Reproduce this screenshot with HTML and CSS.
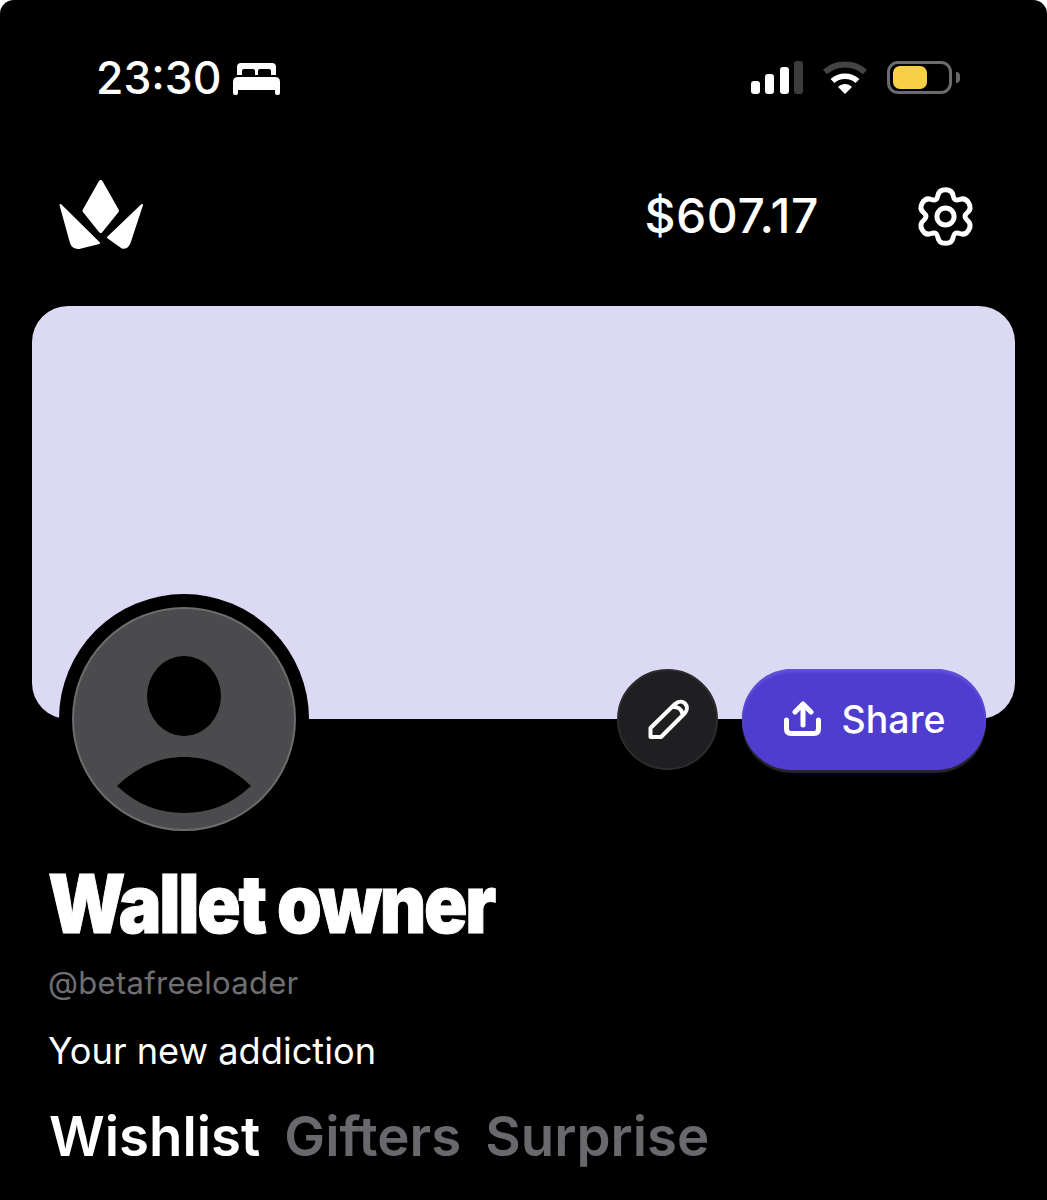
FILE: index.html
```html
<!DOCTYPE html>
<html lang="en">
<head>
<meta charset="utf-8">
<title>Wallet owner</title>
<link rel="stylesheet" href="styles.css">
</head>
<body>
<div class="app">
  <div class="status">
    <div class="status-left">
      <span class="time">23:30</span>
      <svg class="bed" viewBox="0 0 47 33" width="47" height="33"><path fill="#fff" d="M4 13V5q0-4 4-4h31q4 0 4 4v8h-5V9q0-2-2-2h-9q-2 0-2 2v4h-3V9q0-2-2-2h-9q-2 0-2 2v4zM5 15h37q5 0 5 5v11q0 2-2 2h-1q-2 0-2-2v-3H5v3q0 2-2 2H2q-2 0-2-2V20q0-5 5-5z"/></svg>
    </div>
    <div class="status-right">
      <svg class="signal" viewBox="0 0 53 33" width="53" height="33">
        <rect x="0" y="20" width="9" height="13" rx="3" fill="#fff"/>
        <rect x="14" y="13" width="9" height="20" rx="3" fill="#fff"/>
        <rect x="29" y="6" width="9" height="27" rx="3" fill="#fff"/>
        <rect x="43" y="0" width="9" height="33" rx="3" fill="#3c3c3e"/>
      </svg>
      <svg class="wifi" viewBox="0 0 46 33" width="46" height="33">
        <path d="M3 11C14 1 32 1 43 11" fill="none" stroke="#444446" stroke-width="6"/>
        <path d="M10.500 20C17 13.500 29 13.500 35.500 20" fill="none" stroke="#fff" stroke-width="5.500"/>
        <path d="M16 26c4-4 10-4 14 0l-7 7z" fill="#fff"/>
      </svg>
      <div class="battery"><div class="battery-level"></div></div>
      <div class="battery-nub"></div>
    </div>
  </div>

  <header class="top">
    <svg class="logo" viewBox="0 0 86 72" width="86" height="72">
      <g fill="#fff" stroke="#fff" stroke-linejoin="round">
        <path stroke-width="4" d="M42.700 4 59 32.700 42.700 53 26.500 32.700z"/>
        <path stroke-width="2" d="M2.500 27 41 65 21 70Q15 70.500 13 65z"/>
        <path stroke-width="2" d="M84 27 50 59.500 64 69.500Q70 71 72.500 62z"/>
      </g>
    </svg>
    <span class="balance">$607.17</span>
    <svg class="gear" viewBox="-32 -32 64 64" width="61" height="61">
      <path fill="none" stroke="#fff" stroke-width="5.200" d="M-8.010 -21.870Q-7.020 -28.140 0 -28.140Q7.020 -28.140 8.010 -21.870Q9 -15.590 14.930 -17.870Q20.860 -20.150 24.370 -14.070Q27.880 -7.990 22.940 -4Q18 0 22.940 4Q27.880 7.990 24.370 14.070Q20.860 20.150 14.930 17.870Q9 15.590 8.010 21.870Q7.020 28.140 0 28.140Q-7.020 28.140 -8.010 21.870Q-9 15.590 -14.930 17.870Q-20.860 20.150 -24.370 14.070Q-27.880 7.990 -22.940 4Q-18 0 -22.940 -4Q-27.880 -7.990 -24.370 -14.070Q-20.860 -20.150 -14.930 -17.870Q-9 -15.590 -8.010 -21.870Z"/>
      <circle r="9" fill="none" stroke="#fff" stroke-width="5.200"/>
    </svg>
  </header>

  <section class="banner">
    <div class="avatar-ring">
      <div class="avatar">
        <svg viewBox="0 0 220 220" width="220" height="220">
          <ellipse cx="110" cy="87" rx="37" ry="40" fill="#000"/>
          <path d="M43 177C62 159 84 148 110 148C136 148 158 159 177 177C158 195 136 204 110 204C84 204 62 195 43 177Z" fill="#000"/>
        </svg>
      </div>
    </div>
  </section>

  <div class="actions">
    <button class="edit" type="button" aria-label="Edit">
      <svg viewBox="0 0 42 42" width="42" height="42" fill="none" stroke="#fff" stroke-width="4" stroke-linejoin="round" stroke-linecap="round">
        <path d="M3.500 29 28 5C31.500 2 35.500 2 38 4.500C40.500 7 40.500 11 38 14L14 38H3.500z"/>
        <path d="M27 8Q34 8 35.500 15"/>
      </svg>
    </button>
    <button class="share" type="button">
      <svg viewBox="0 0 40 38" width="40" height="38" fill="none" stroke="#fff" stroke-width="5" stroke-linecap="round" stroke-linejoin="round">
        <path d="M3.500 19V28Q3.500 32.500 8 32.500H31Q35.500 32.500 35.500 28V19"/>
        <path d="M20 24V4"/>
        <path d="M12 11 20 3 28 11"/>
      </svg>
      <span>Share</span>
    </button>
  </div>

  <div class="profile">
    <h1 class="name">Wallet owner</h1>
    <p class="handle">@betafreeloader</p>
    <p class="bio">Your new addiction</p>
    <nav class="tabs">
      <span class="tab tab-active">Wishlist</span>
      <span class="tab">Gifters</span>
      <span class="tab">Surprise</span>
    </nav>
  </div>
</div>
</body>
</html>
```
FILE: styles.css
```css
* { box-sizing: border-box; }
html, body { margin: 0; padding: 0; background: #fff; }
.app {
  width: 1047px;
  height: 1200px;
  overflow: hidden;
  background: #000;
  border-radius: 14px 14px 0 0;
  color: #fff;
  font-family: Inter, "Liberation Sans", sans-serif;
  padding: 0 32px;
}
.status {
  height: 122px;
  padding: 61px 55px 0 64px;
  display: flex;
  justify-content: space-between;
  align-items: flex-start;
}
.status-left { display: flex; align-items: center; gap: 12px; height: 34px; }
.time { font-size: 44.500px; font-weight: 500; line-height: 34px; }
.status-right { display: flex; align-items: flex-start; }
.signal { margin-right: 18px; }
.wifi { margin-right: 19px; }
.battery {
  width: 65px;
  height: 33px;
  border: 3px solid #6c6c6e;
  border-radius: 11px;
  padding: 2px 3px;
}
.battery-level { width: 34px; height: 23px; background: #f7d046; border-radius: 7px; }
.battery-nub {
  width: 4px;
  height: 11px;
  margin: 11px 0 0 4px;
  background: #68686a;
  border-radius: 0 4px 4px 0;
}
.top {
  height: 184px;
  padding: 56px 39px 0 26px;
  display: flex;
  align-items: flex-start;
}
.logo { display: block; }
.balance {
  margin-left: auto;
  margin-top: 8px;
  font-size: 48px;
  font-weight: 500;
  line-height: 60px;
  letter-spacing: 0.600px;
}
.gear { display: block; margin-left: 96px; margin-top: 8px; }
.banner {
  position: relative;
  height: 413px;
  background: #dcd9f5;
  border-radius: 36px;
}
.avatar-ring {
  position: absolute;
  left: 27px;
  top: 288px;
  width: 250px;
  height: 250px;
  border-radius: 50%;
  background: #000;
  padding: 13px;
}
.avatar {
  width: 224px;
  height: 224px;
  border-radius: 50%;
  background: #4b4a4c;
  border: 2px solid #6c6c6e;
}
.avatar svg { display: block; }
.actions {
  position: relative;
  margin-top: -50px;
  padding-right: 29px;
  display: flex;
  justify-content: flex-end;
  gap: 24px;
}
.edit {
  width: 101px;
  height: 101px;
  padding: 0;
  border-radius: 50%;
  background: #1f1e20;
  border: 2px solid #2c2b2e;
  display: flex;
  align-items: center;
  justify-content: center;
}
.share {
  width: 244px;
  height: 101px;
  padding: 0;
  border: 0;
  border-radius: 50px;
  background: #4f3dd0;
  box-shadow: inset 0 3px 3px #6353d8, 0 3px 1px #26252c;
  color: #fff;
  font-family: inherit;
  font-size: 37.500px;
  font-weight: 500;
  display: flex;
  align-items: center;
  justify-content: center;
  gap: 19px;
}
.profile { padding: 0 0 0 16px; }
.name {
  margin: 88px 0 0;
  font-size: 81px;
  line-height: 92px;
  font-weight: 900;
  letter-spacing: -2.500px;
  white-space: nowrap;
  -webkit-text-stroke: 1px #fff;
  transform: scaleX(0.885);
  transform-origin: left center;
}
.handle {
  margin: 15px 0 0;
  font-size: 31px;
  line-height: 36px;
  letter-spacing: 0.300px;
  color: #6f6f72;
}
.bio {
  margin: 28px 0 0;
  font-size: 36.200px;
  line-height: 44px;
}
.tabs {
  margin-top: 31px;
  margin-left: 1px;
  display: flex;
  gap: 24px;
  font-size: 54.600px;
  font-weight: 600;
  line-height: 64px;
}
.tab { color: #69686c; }
.tab-active { color: #fff; }
```
